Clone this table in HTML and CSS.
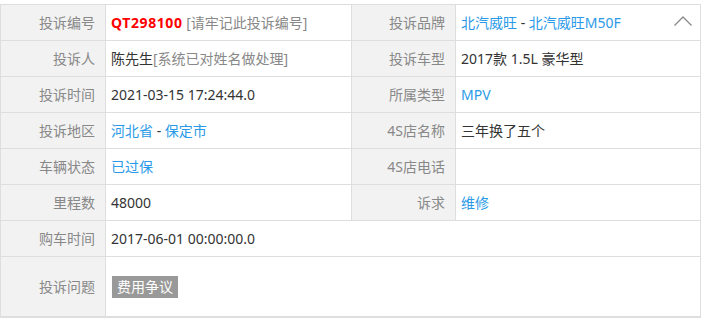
FILE: index.html
```html
<!DOCTYPE html>
<html lang="zh-CN">
<head>
<meta charset="utf-8">
<title>投诉详情</title>
<link rel="stylesheet" href="styles.css">
</head>
<body>
<div class="complaint">
  <table class="info">
    <colgroup>
      <col class="c-label">
      <col class="c-value">
      <col class="c-label2">
      <col class="c-value2">
    </colgroup>
    <tr>
      <th>投诉编号</th>
      <td><span class="code">QT298100</span> <span class="note">[请牢记此投诉编号]</span></td>
      <th>投诉品牌</th>
      <td><a class="link">北汽威旺</a> - <a class="link">北汽威旺M50F</a></td>
    </tr>
    <tr>
      <th>投诉人</th>
      <td>陈先生<span class="note">[系统已对姓名做处理]</span></td>
      <th>投诉车型</th>
      <td>2017款 1.5L 豪华型</td>
    </tr>
    <tr>
      <th>投诉时间</th>
      <td>2021-03-15 17:24:44.0</td>
      <th>所属类型</th>
      <td><a class="link">MPV</a></td>
    </tr>
    <tr>
      <th>投诉地区</th>
      <td><a class="link">河北省</a> - <a class="link">保定市</a></td>
      <th>4S店名称</th>
      <td>三年换了五个</td>
    </tr>
    <tr>
      <th>车辆状态</th>
      <td><a class="link">已过保</a></td>
      <th>4S店电话</th>
      <td></td>
    </tr>
    <tr>
      <th>里程数</th>
      <td>48000</td>
      <th>诉求</th>
      <td><a class="link">维修</a></td>
    </tr>
    <tr>
      <th>购车时间</th>
      <td colspan="3">2017-06-01 00:00:00.0</td>
    </tr>
    <tr class="tall">
      <th>投诉问题</th>
      <td colspan="3"><span class="tag">费用争议</span></td>
    </tr>
  </table>
  <button class="toggle" type="button" aria-label="收起">
    <svg width="20" height="12" viewBox="0 0 20 12"><path d="M1.5 10.5 L10 2 L18.5 10.5" fill="none" stroke="#8a8a8a" stroke-width="1.3"/></svg>
  </button>
</div>
</body>
</html>
```

FILE: styles.css
```css
html, body {
  margin: 0;
  padding: 0;
  background: #fff;
}

body {
  font-family: "Noto Sans", "Noto Sans CJK SC", sans-serif;
  font-size: 14px;
  color: #333;
}

.complaint {
  position: relative;
  width: 700px;
  padding-top: 4px;
}

.info {
  width: 700px;
  table-layout: fixed;
  border-collapse: collapse;
  border-bottom: 2px solid #dedede;
}

.c-label { width: 105px; }
.c-value { width: 246px; }
.c-label2 { width: 104px; }
.c-value2 { width: 245px; }

.info th,
.info td {
  height: 35px;
  padding: 0;
  border: 1px solid #dedede;
  line-height: 20px;
  white-space: nowrap;
}

.info th {
  background: #f2f2f2;
  color: #888;
  font-weight: normal;
  text-align: right;
  padding-right: 10px;
}

.info td {
  padding-left: 5px;
  text-align: left;
}

.info tr.tall th,
.info tr.tall td {
  height: 59px;
}

.code {
  color: #f00;
  font-weight: bold;
  letter-spacing: 0.6px;
}

.note {
  color: #888;
}

.link {
  color: #2a9ae8;
  text-decoration: none;
}

.tag {
  display: inline-block;
  height: 22px;
  line-height: 22px;
  padding: 0 5px;
  margin-left: 1px;
  background: #999;
  color: #fff;
}

.toggle {
  position: absolute;
  top: 15px;
  right: 7px;
  width: 20px;
  height: 14px;
  padding: 0;
  border: 0;
  background: transparent;
  display: flex;
}
```
